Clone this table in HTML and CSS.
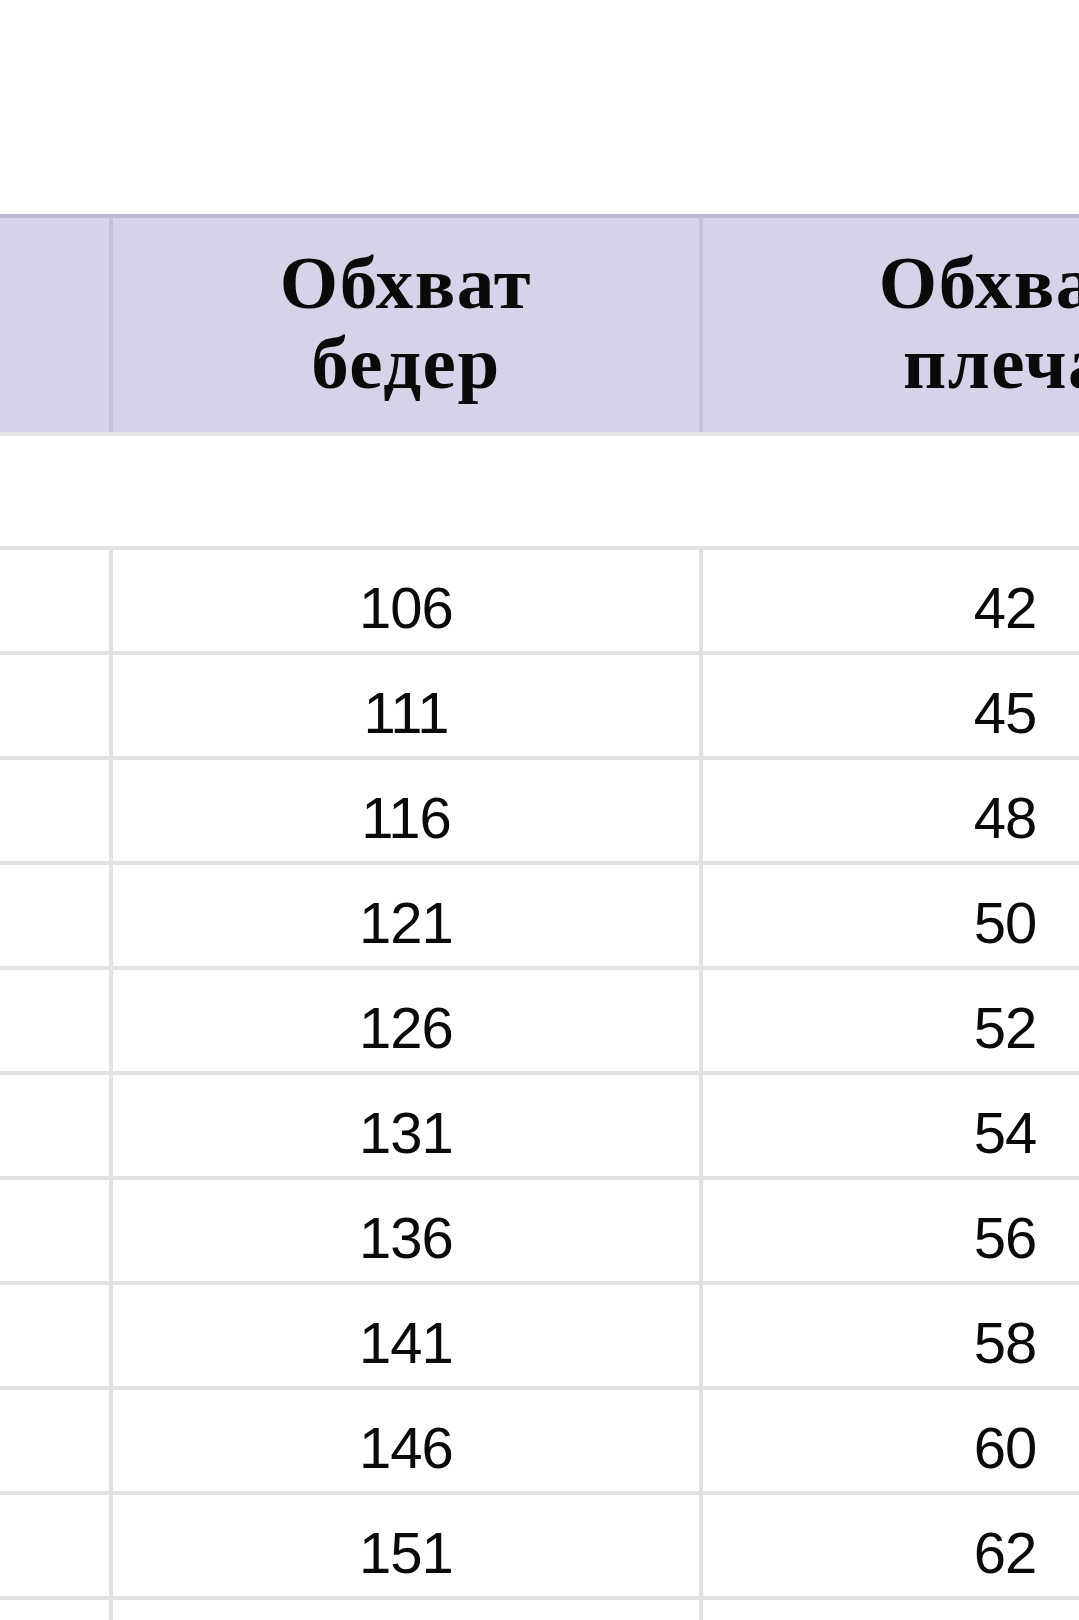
FILE: index.html
```html
<!DOCTYPE html>
<html lang="ru">
<head>
<meta charset="utf-8">
<title>Таблица размеров</title>
<link rel="stylesheet" href="styles.css">
</head>
<body>
<div class="viewport">
  <div class="sheet">
    <div class="row head">
      <div class="cell"></div>
      <div class="cell">Обхват<br>бедер</div>
      <div class="cell">Обхват<br>плеча</div>
    </div>
    <div class="gap"></div>
    <div class="row data"><div class="cell"></div><div class="cell">106</div><div class="cell">42</div></div>
    <div class="row data"><div class="cell"></div><div class="cell">111</div><div class="cell">45</div></div>
    <div class="row data"><div class="cell"></div><div class="cell">116</div><div class="cell">48</div></div>
    <div class="row data"><div class="cell"></div><div class="cell">121</div><div class="cell">50</div></div>
    <div class="row data"><div class="cell"></div><div class="cell">126</div><div class="cell">52</div></div>
    <div class="row data"><div class="cell"></div><div class="cell">131</div><div class="cell">54</div></div>
    <div class="row data"><div class="cell"></div><div class="cell">136</div><div class="cell">56</div></div>
    <div class="row data"><div class="cell"></div><div class="cell">141</div><div class="cell">58</div></div>
    <div class="row data"><div class="cell"></div><div class="cell">146</div><div class="cell">60</div></div>
    <div class="row data"><div class="cell"></div><div class="cell">151</div><div class="cell">62</div></div>
    <div class="row data"><div class="cell"></div><div class="cell"></div><div class="cell"></div></div>
  </div>
</div>
</body>
</html>
```

FILE: styles.css
```css
html, body {
  margin: 0;
  padding: 0;
  background: #ffffff;
}

.viewport {
  width: 1079px;
  height: 1620px;
  overflow: hidden;
  padding-top: 214px;
  box-sizing: border-box;
}

.sheet {
  width: 1311px;
}

.row {
  display: grid;
  grid-template-columns: 109px 590px 608px;
}

.cell {
  box-sizing: border-box;
  display: flex;
  align-items: center;
  justify-content: center;
  text-align: center;
  color: #0a0a0a;
}

.cell + .cell {
  border-left: 4px solid #e2e2e2;
}

.head {
  background: #d7d2e8;
  border-top: 4px solid #bdb8d0;
  height: 218px;
  box-sizing: border-box;
}

.head .cell {
  font-family: "Liberation Serif", "Times New Roman", serif;
  font-weight: bold;
  font-size: 75px;
  line-height: 80px;
  letter-spacing: 1.5px;
  padding-bottom: 4px;
}

.head .cell + .cell {
  border-left-color: #c6c1d8;
}

.gap {
  height: 114px;
  box-sizing: border-box;
  border-top: 4px solid #e4e4e4;
}

.data {
  height: 105px;
  box-sizing: border-box;
  border-top: 4px solid #e2e2e2;
}

.data .cell {
  font-family: "Liberation Sans", Arial, sans-serif;
  font-size: 58px;
  line-height: 58px;
  letter-spacing: -1px;
  padding-top: 14px;
}
```
